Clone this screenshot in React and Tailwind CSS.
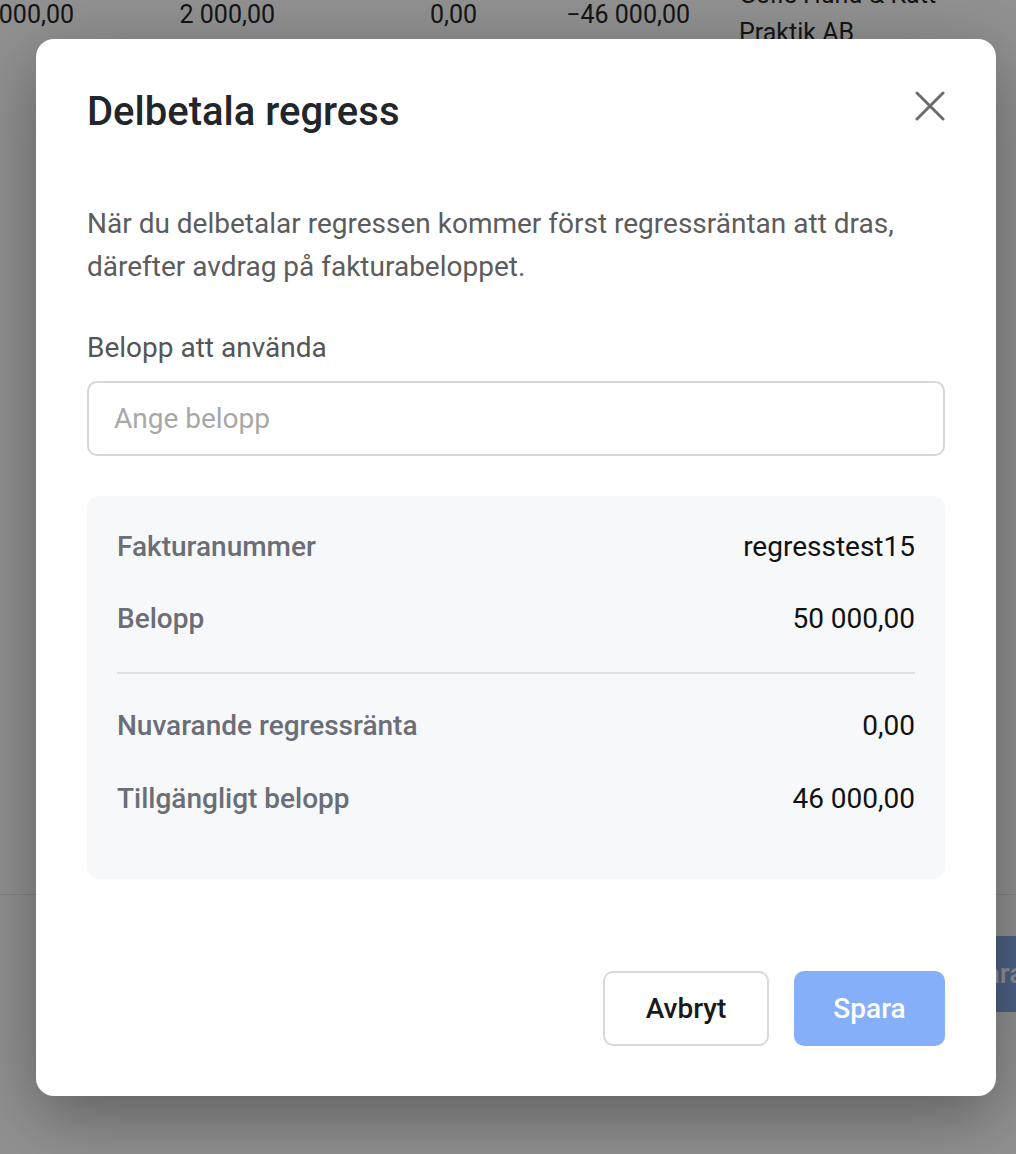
export default function App() {
  const rows = [
    { label: 'Fakturanummer', value: 'regresstest15' },
    { label: 'Belopp', value: '50 000,00' },
  ];
  const rows2 = [
    { label: 'Nuvarande regressränta', value: '0,00' },
    { label: 'Tillgängligt belopp', value: '46 000,00' },
  ];

  return (
    <div className="relative h-[1154px] w-full overflow-hidden bg-white font-['Roboto',sans-serif]">
      {/* Sidan bakom dialogen */}
      <div className="flex flex-col">
        <div className="mt-[-24px] flex items-start whitespace-nowrap text-[25px] leading-[38px] text-[#262626]">
          <div className="mt-[20px] flex w-[74px] shrink-0 justify-end overflow-hidden">
            <span>40 000,00</span>
          </div>
          <div className="mt-[20px] w-[201px] shrink-0 text-right">2 000,00</div>
          <div className="mt-[20px] w-[202px] shrink-0 text-right">0,00</div>
          <div className="mt-[20px] w-[213px] shrink-0 text-right">−46 000,00</div>
          <div className="ml-[49px]">
            <p>Gefle Hund &amp; Katt</p>
            <p>Praktik AB</p>
          </div>
        </div>
        <div className="mt-[842px] h-px bg-[#e6e6e6]"></div>
        <div className="mt-[41px] flex justify-end">
          <div className="flex h-[76px] w-[140px] items-center rounded-l-[10px] bg-[#8aadec] pl-[76px] text-[28px] font-medium text-white whitespace-nowrap overflow-hidden">
            Spara
          </div>
        </div>
      </div>

      {/* Overlay + dialog */}
      <div className="absolute inset-0 flex justify-start bg-black/[0.43] pl-[36px]">
        <div className="mt-[39px] flex h-[1057px] w-[960px] flex-col rounded-[18px] bg-white px-[51px] pt-[50px] pb-[50px] shadow-[0_20px_70px_rgba(0,0,0,0.35)]">
          <div className="flex items-start justify-between">
            <h1 className="text-[40px] font-medium leading-[46px] text-[#222529]">Delbetala regress</h1>
            <svg width="30" height="30" viewBox="0 0 30 30" className="mt-[2px]">
              <path d="M2 2 L28 28 M28 2 L2 28" stroke="#6d6d6d" strokeWidth="3" strokeLinecap="round" />
            </svg>
          </div>

          <p className="mt-[67px] text-[28px] leading-[43px] text-[#5c5c5c]">
            När du delbetalar regressen kommer först regressräntan att dras, därefter avdrag på fakturabeloppet.
          </p>

          <label className="mt-[38px] text-[28px] leading-[43px] text-[#555555]">Belopp att använda</label>
          <input
            placeholder="Ange belopp"
            className="mt-[12px] h-[75px] w-full rounded-[10px] border-2 border-[#d6d6d6] px-[25px] text-[28px] text-[#222] placeholder:text-[#a8a8a8] outline-none"
          />

          <div className="mt-[40px] flex h-[383px] flex-col rounded-[12px] bg-[#f7f8fa] px-[30px] pt-[33px]">
            <div className="flex flex-col gap-[36px]">
              {rows.map((r) => (
                <div key={r.label} className="flex items-center justify-between text-[28px] leading-[36px]">
                  <span className="font-medium text-[#6b6e76]">{r.label}</span>
                  <span className="text-[#111111]">{r.value}</span>
                </div>
              ))}
            </div>
            <div className="mt-[35px] h-[2px] bg-[#e1e2e5]"></div>
            <div className="mt-[34px] flex flex-col gap-[37px]">
              {rows2.map((r) => (
                <div key={r.label} className="flex items-center justify-between text-[28px] leading-[36px]">
                  <span className="font-medium text-[#6b6e76]">{r.label}</span>
                  <span className="text-[#111111]">{r.value}</span>
                </div>
              ))}
            </div>
          </div>

          <div className="mt-auto flex justify-end gap-[25px]">
            <button className="h-[75px] w-[166px] rounded-[10px] border-2 border-[#d9d9d9] bg-white text-[28px] font-medium text-[#1a1a1a]">
              Avbryt
            </button>
            <button className="h-[75px] w-[151px] rounded-[10px] bg-[#85aff9] text-[28px] font-medium text-white">
              Spara
            </button>
          </div>
        </div>
      </div>
    </div>
  );
}
